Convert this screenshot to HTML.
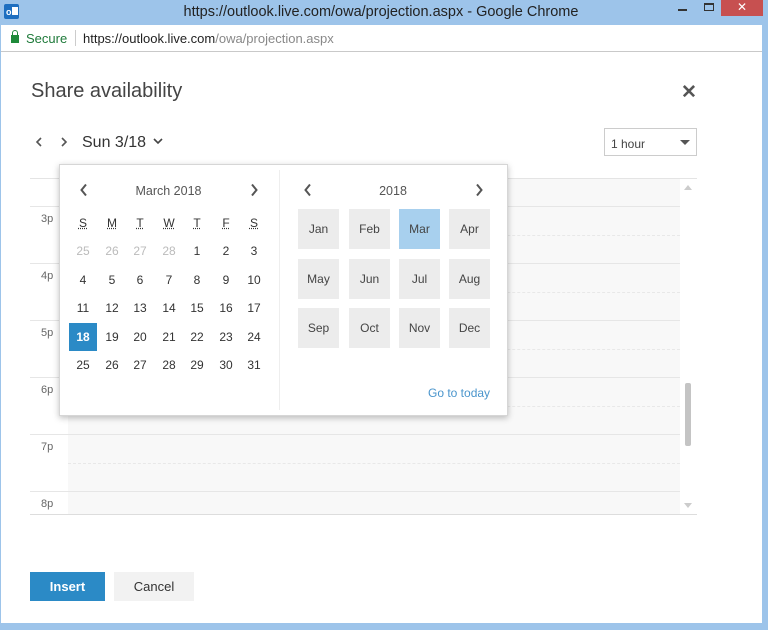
<!DOCTYPE html>
<html><head><style>
*{margin:0;padding:0;box-sizing:border-box}
body{width:768px;height:630px;overflow:hidden;background:#9dc4ea;font-family:"Liberation Sans",sans-serif;position:relative}
.abs{position:absolute}
.t{color:#333;font-size:12px;text-align:center}
</style></head><body>
<!-- title bar -->
<div class="abs" style="left:4px;top:4px;width:15px;height:15px;background:#1e6fc0;border-radius:2px"><div class="abs" style="left:8px;top:3px;width:6px;height:8px;background:#fff"></div><div class="abs" style="left:2px;top:4px;font-size:9px;color:#fff;font-weight:bold;line-height:8px">o</div></div>
<div class="abs" style="left:0;top:4px;width:762px;text-align:center;font-size:14.5px;color:#222">https://outlook.live.com/owa/projection.aspx - Google Chrome</div>
<div class="abs" style="left:678px;top:9px;width:9px;height:2px;background:#333"></div>
<div class="abs" style="left:704px;top:3px;width:10px;height:8px;border:1px solid #333;border-top:2px solid #333"></div>
<div class="abs" style="left:721px;top:0;width:42px;height:16px;background:#c75050;color:#fff;font-size:12px;text-align:center;line-height:15px">✕</div>
<!-- address bar -->
<div class="abs" style="left:1px;top:25px;width:761px;height:27px;background:#fff;border-bottom:1px solid #c9c9c9"></div>
<div class="abs" style="left:11px;top:35px;width:8px;height:8px;background:#1e8a3a"></div>
<div class="abs" style="left:12px;top:30px;width:6px;height:7px;border:1.5px solid #1e8a3a;border-bottom:none;border-radius:3px 3px 0 0"></div>
<div class="abs" style="left:26px;top:31px;font-size:13px;color:#1e7a3a">Secure</div>
<div class="abs" style="left:75px;top:30px;width:1px;height:16px;background:#ccc"></div>
<div class="abs" style="left:83px;top:31px;font-size:13px;color:#222">https://outlook.live.com<span style="color:#888">/owa/projection.aspx</span></div>
<!-- content -->
<div class="abs" style="left:1px;top:52px;width:761px;height:571px;background:#fff"></div>
<div class="abs" style="left:31px;top:80px;font-size:20px;color:#444">Share availability</div>
<div class="abs" style="left:681px;top:81px;font-size:19px;color:#555;font-weight:bold">✕</div>
<svg class="abs" style="left:35px;top:137px" width="8" height="10"><path d="M6 1 L2 5 L6 9" stroke="#555" stroke-width="1.6" fill="none"/></svg>
<svg class="abs" style="left:60px;top:137px" width="8" height="10"><path d="M2 1 L6 5 L2 9" stroke="#555" stroke-width="1.6" fill="none"/></svg>
<div class="abs" style="left:82px;top:134px;font-size:16px;color:#333">Sun 3/18</div>
<svg class="abs" style="left:153px;top:137px" width="10" height="8"><path d="M1 2 L5 6 L9 2" stroke="#444" stroke-width="1.6" fill="none"/></svg>
<div class="abs" style="left:604px;top:128px;width:93px;height:28px;border:1px solid #ccc;font-size:12px;color:#444;padding:8px 0 0 6px">1 hour</div>
<svg class="abs" style="left:680px;top:140px" width="10" height="6"><path d="M0 0 L10 0 L5 5Z" fill="#555"/></svg>
<!-- grid -->
<div class="abs" style="left:30px;top:178px;width:667px;height:1px;background:#e4e4e4"></div>
<div class="abs" style="left:68px;top:179px;width:612px;height:335px;background:#f8f8f8"></div>
<div class="abs" style="left:30px;top:514px;width:667px;height:1px;background:#ddd"></div>
<div id="g"></div>
<div class="abs" style="left:685px;top:383px;width:6px;height:63px;background:#c4c4c4;border-radius:2px"></div>
<svg class="abs" style="left:684px;top:185px" width="8" height="6"><path d="M0 5 L8 5 L4 0Z" fill="#ccc"/></svg>
<svg class="abs" style="left:684px;top:503px" width="8" height="6"><path d="M0 0 L8 0 L4 5Z" fill="#ccc"/></svg>
<!-- popup -->
<div class="abs" style="left:59px;top:164px;width:449px;height:252px;background:#fff;border:1px solid #d6d6d6;box-shadow:0 2px 6px rgba(0,0,0,.25)"></div>
<div class="abs" style="left:279px;top:170px;width:1px;height:240px;background:#eee"></div>
<svg class="abs" style="left:79px;top:183px" width="10" height="14"><path d="M7 1.5 L2.5 7 L7 12.5" stroke="#555" stroke-width="2" fill="none"/></svg>
<svg class="abs" style="left:249px;top:183px" width="10" height="14"><path d="M3 1.5 L7.5 7 L3 12.5" stroke="#555" stroke-width="2" fill="none"/></svg>
<div class="abs t" style="left:120px;top:184px;width:97px;font-size:12.5px;color:#555">March 2018</div>
<svg class="abs" style="left:303px;top:183px" width="10" height="14"><path d="M7 1.5 L2.5 7 L7 12.5" stroke="#555" stroke-width="2" fill="none"/></svg>
<svg class="abs" style="left:474px;top:183px" width="10" height="14"><path d="M3 1.5 L7.5 7 L3 12.5" stroke="#555" stroke-width="2" fill="none"/></svg>
<div class="abs t" style="left:360px;top:184px;width:66px;font-size:12.5px;color:#555">2018</div>
<div id="d"></div>
<div id="m"></div>
<div class="abs" style="left:428px;top:386px;font-size:12px;color:#4a95cc">Go to today</div>
<!-- buttons -->
<div class="abs" style="left:30px;top:572px;width:75px;height:29px;background:#2b8ac6;color:#fff;font-size:13px;font-weight:bold;text-align:center;line-height:29px">Insert</div>
<div class="abs" style="left:114px;top:572px;width:80px;height:29px;background:#f2f2f2;color:#333;font-size:13px;text-align:center;line-height:29px">Cancel</div>
<script>
var g='';var labs=['3p','4p','5p','6p','7p','8p'];
for(var i=0;i<6;i++){var y=207+57*i;
g+='<div class="abs" style="left:30px;top:'+(y-1)+'px;width:650px;height:1px;background:#e6e6e6"></div>';
if(i<5)g+='<div class="abs" style="left:68px;top:'+(y+28)+'px;width:612px;border-top:1px dashed #e8e8e8"></div>';
g+='<div class="abs" style="left:41px;top:'+(y+6)+'px;font-size:11px;color:#666">'+labs[i]+'</div>';}
document.getElementById('g').innerHTML=g;
var d='',cx=[83,112,140,169,197,226,254],h=['S','M','T','W','T','F','S'];
for(var c=0;c<7;c++)d+='<div class="abs t" style="left:'+(cx[c]-10)+'px;top:216px;width:20px;text-decoration:underline dotted">'+h[c]+'</div>';
var n=[25,26,27,28];for(var k=1;k<=31;k++)n.push(k);
for(var j=0;j<35;j++){var r=Math.floor(j/7),c=j%7,y=244+28.5*r,s=(j==21);
d+='<div class="abs t" style="left:'+(cx[c]-14)+'px;top:'+(y-7)+'px;width:28px;height:28px;line-height:28px;'+(j<4?'color:#bbb;':'')+(s?'background:#2b8ac6;color:#fff;font-weight:bold;':'')+'">'+n[j]+'</div>';}
document.getElementById('d').innerHTML=d;
var m='',mn=['Jan','Feb','Mar','Apr','May','Jun','Jul','Aug','Sep','Oct','Nov','Dec'],mx=[298,349,399,449],my=[209,259,308];
for(var q=0;q<12;q++)m+='<div class="abs t" style="left:'+mx[q%4]+'px;top:'+my[Math.floor(q/4)]+'px;width:41px;height:40px;line-height:40px;background:'+(q==2?'#a8d0ee':'#ececec')+';color:#444">'+mn[q]+'</div>';
document.getElementById('m').innerHTML=m;
</script>
</body></html>
